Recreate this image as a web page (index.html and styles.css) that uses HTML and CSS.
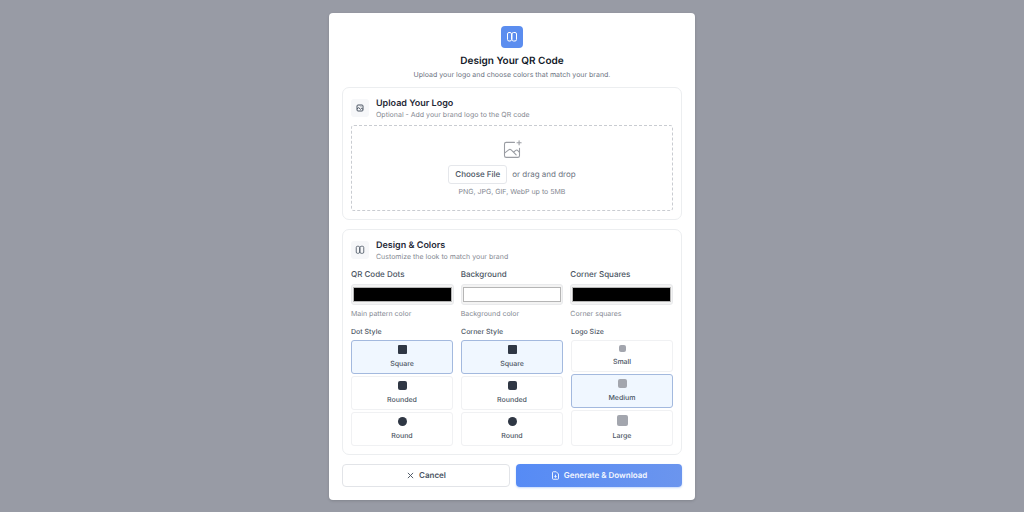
FILE: index.html
```html
<!DOCTYPE html>
<html lang="en">
<head>
  <meta charset="UTF-8">
  <meta name="viewport" content="width=device-width, initial-scale=1.0">
  <title>Design Your QR Code</title>
  <link rel="stylesheet" href="styles.css">
</head>
<body>
  <div class="overlay">
    <form class="modal" role="dialog" aria-labelledby="modalTitle">
      <header class="modal-header">
        <div class="brand-icon">
          <svg width="12" height="12" viewBox="0 0 24 24" fill="none" stroke="currentColor" stroke-width="2">
            <rect x="3" y="3" width="8" height="17" rx="3"/>
            <rect x="12" y="3" width="9" height="17" rx="3"/>
          </svg>
        </div>
        <h1 id="modalTitle">Design Your QR Code</h1>
        <p>Upload your logo and choose colors that match your brand.</p>
      </header>

      <section class="card">
        <div class="card-header">
          <div class="card-icon">
            <svg width="8" height="8" viewBox="0 0 24 24" fill="none" stroke="currentColor" stroke-width="3">
              <rect x="3" y="3" width="18" height="18" rx="3"/>
              <path d="M3 15l5-4 6 5 3-3 4 3M14 8h2"/>
            </svg>
          </div>
          <div>
            <h2>Upload Your Logo</h2>
            <p>Optional - Add your brand logo to the QR code</p>
          </div>
        </div>
        <div class="dropzone">
          <svg class="dropzone-icon" width="20" height="20" viewBox="0 0 24 24" fill="none" stroke="currentColor" stroke-width="1.3" stroke-linecap="round" stroke-linejoin="round">
            <path d="M15 4H5a2 2 0 0 0-2 2v14a2 2 0 0 0 2 2h14a2 2 0 0 0 2-2V11"/>
            <path d="M3 17l5-4q1.500-1 3 0l6 6M14 16l2-2q2-1.500 3 0l2 2"/>
            <path d="M20.500 2v5M18 4.500h5"/>
          </svg>
          <div class="dropzone-row">
            <button type="button" class="choose-file" id="chooseFile">Choose File</button>
            <input type="file" id="logoFile" accept=".png,.jpg,.jpeg,.gif,.webp" aria-label="Logo file" hidden>
            <span>or drag and drop</span>
          </div>
          <p>PNG, JPG, GIF, WebP up to 5MB</p>
        </div>
      </section>

      <section class="card card-design">
        <div class="card-header">
          <div class="card-icon">
            <svg width="10" height="10" viewBox="0 0 24 24" fill="none" stroke="currentColor" stroke-width="2">
              <rect x="3" y="3" width="8" height="17" rx="3"/>
              <rect x="12" y="3" width="9" height="17" rx="3"/>
            </svg>
          </div>
          <div>
            <h2>Design &amp; Colors</h2>
            <p>Customize the look to match your brand</p>
          </div>
        </div>

        <div class="colors">
          <div class="color-field">
            <label for="dotColor">QR Code Dots</label>
            <input type="color" id="dotColor" value="#000000">
            <p>Main pattern color</p>
          </div>
          <div class="color-field">
            <label for="bgColor">Background</label>
            <input type="color" id="bgColor" value="#ffffff">
            <p>Background color</p>
          </div>
          <div class="color-field">
            <label for="cornerColor">Corner Squares</label>
            <input type="color" id="cornerColor" value="#000000">
            <p>Corner squares</p>
          </div>
        </div>

        <div class="styles">
          <fieldset class="options">
            <legend>Dot Style</legend>
            <label class="option"><input type="radio" name="dotStyle" checked><span class="shape square"></span>Square</label>
            <label class="option"><input type="radio" name="dotStyle"><span class="shape rounded"></span>Rounded</label>
            <label class="option"><input type="radio" name="dotStyle"><span class="shape round"></span>Round</label>
          </fieldset>
          <fieldset class="options">
            <legend>Corner Style</legend>
            <label class="option"><input type="radio" name="cornerStyle" checked><span class="shape square"></span>Square</label>
            <label class="option"><input type="radio" name="cornerStyle"><span class="shape rounded"></span>Rounded</label>
            <label class="option"><input type="radio" name="cornerStyle"><span class="shape round"></span>Round</label>
          </fieldset>
          <fieldset class="options">
            <legend>Logo Size</legend>
            <label class="option"><input type="radio" name="logoSize"><span class="shape logo-small"></span>Small</label>
            <label class="option"><input type="radio" name="logoSize" checked><span class="shape logo-medium"></span>Medium</label>
            <label class="option"><input type="radio" name="logoSize"><span class="shape logo-large"></span>Large</label>
          </fieldset>
        </div>
      </section>

      <footer class="actions">
        <button type="button" class="btn btn-cancel">
          <svg width="9" height="9" viewBox="0 0 24 24" fill="none" stroke="currentColor" stroke-width="2.500">
            <path d="M5 5l14 14M19 5L5 19"/>
          </svg>
          Cancel
        </button>
        <button type="button" class="btn btn-primary">
          <svg width="9" height="9" viewBox="0 0 24 24" fill="none" stroke="currentColor" stroke-width="2.500" stroke-linejoin="round">
            <path d="M14 2H6a2 2 0 0 0-2 2v16a2 2 0 0 0 2 2h12a2 2 0 0 0 2-2V8zM12 10v7M9 14l3 3 3-3"/>
          </svg>
          Generate &amp; Download
        </button>
      </footer>
    </form>
  </div>

  <script>
    document.getElementById('chooseFile').addEventListener('click', function () {
      document.getElementById('logoFile').click();
    });
  </script>
</body>
</html>
```
FILE: styles.css
```css
* {
  box-sizing: border-box;
}
body {
  margin: 0;
  font-family: Inter, "Liberation Sans", sans-serif;
  font-size: 7px;
  text-rendering: geometricPrecision;
  color: #1f2937;
  background-color: #989ba5;
}
h1, h2, p {
  margin: 0;
}
button, input {
  font-family: inherit;
  text-rendering: inherit;
}
.overlay {
  min-height: 100vh;
  display: flex;
  align-items: center;
  justify-content: center;
}
.modal {
  width: 100%;
  max-width: 366px;
  padding: 13px;
  background: #fff;
  border-radius: 4px;
  box-shadow: 0 1px 3px rgba(0,0,0,0.15);
}
.modal-header {
  display: flex;
  flex-direction: column;
  align-items: center;
  margin-bottom: 7px;
}
.brand-icon {
  width: 22px;
  height: 22px;
  display: flex;
  align-items: center;
  justify-content: center;
  margin-bottom: 6px;
  color: #fff;
  background: #5b8def;
  border-radius: 4px;
}
h1 {
  font-size: 10px;
  line-height: 14px;
  font-weight: 600;
  color: #111827;
}
p {
  line-height: 10px;
  color: #858992;
}
.modal-header p {
  margin-top: 2px;
  color: #6b7280;
}
.card {
  padding: 9px 8px 8px;
  margin-bottom: 9px;
  border: 1px solid #eceef0;
  border-radius: 7px;
}
.card-header {
  display: flex;
  align-items: center;
  gap: 7px;
  margin-bottom: 5px;
}
.card-design .card-header {
  margin-bottom: 7px;
}
.card-icon {
  width: 18px;
  height: 18px;
  display: flex;
  align-items: center;
  justify-content: center;
  color: #4b5563;
  background: #f6f7f9;
  border-radius: 3px;
}
h2 {
  font-size: 9px;
  line-height: 13px;
  font-weight: 600;
}
.dropzone {
  display: flex;
  flex-direction: column;
  align-items: center;
  padding: 13px;
  border: 1px dashed #c9ccd1;
  border-radius: 3px;
}
.dropzone-icon {
  color: #9a9da3;
  margin-bottom: 6px;
}
.dropzone-row {
  display: flex;
  align-items: center;
  gap: 5px;
  margin-bottom: 3px;
  font-size: 8px;
  color: #6b7280;
}
.choose-file {
  height: 19px;
  padding: 0 6px;
  font-size: 8px;
  font-weight: 500;
  color: #4b5563;
  background: #fff;
  border: 1px solid #e5e7eb;
  border-radius: 3px;
}
.colors {
  display: grid;
  grid-template-columns: repeat(3, 1fr);
  gap: 7px;
  margin-bottom: 8px;
}
.color-field label {
  display: block;
  font-size: 8px;
  line-height: 10px;
  font-weight: 500;
  color: #4b5563;
}
.color-field input {
  display: block;
  width: 100%;
  height: 21px;
  margin: 5px 0 4px;
  padding: 2px 1px;
  background: #f3f3f3;
  border: 1px solid #e9eaec;
  border-radius: 3px;
}
.color-field input::-webkit-color-swatch-wrapper {
  padding: 0;
}
.color-field input::-webkit-color-swatch {
  border: 1px solid #b5b5b5;
}
.styles {
  display: grid;
  grid-template-columns: repeat(3, 1fr);
  gap: 8px;
}
.options {
  display: flex;
  flex-direction: column;
  gap: 2px;
  min-width: 0;
  margin: 0;
  padding: 0;
  border: none;
}
.options legend {
  padding: 0;
  margin-bottom: 3px;
  line-height: 10px;
  font-weight: 500;
  color: #4b5563;
}
.option {
  position: relative;
  display: flex;
  flex-direction: column;
  align-items: center;
  gap: 5px;
  padding: 4px;
  line-height: 10px;
  font-weight: 500;
  color: #4b5563;
  border: 1px solid #f0f1f3;
  border-radius: 3px;
  cursor: pointer;
}
.option input {
  position: absolute;
  inset: 0;
  margin: 0;
  opacity: 0;
  cursor: pointer;
}
.option:has(input:checked) {
  background: #f0f7ff;
  border-color: #a3b9de;
}
.shape {
  width: 9px;
  height: 9px;
  background: #2f3744;
}
.square {
  border-radius: 1px;
}
.rounded {
  border-radius: 2px;
}
.round {
  border-radius: 50%;
}
.logo-small, .logo-medium, .logo-large {
  background: #a3a6ae;
  border-radius: 2px;
}
.logo-small {
  width: 7px;
  height: 7px;
}
.logo-large {
  width: 11px;
  height: 11px;
}
.actions {
  display: flex;
  gap: 6px;
}
.btn {
  flex: 1;
  height: 23px;
  display: flex;
  align-items: center;
  justify-content: center;
  gap: 4px;
  font-size: 8px;
  border-radius: 4px;
  cursor: pointer;
}
.btn-cancel {
  font-weight: 600;
  color: #4b5563;
  background: #fff;
  border: 1px solid #e2e4e8;
}
.btn-primary {
  font-weight: 600;
  color: #f3f7ff;
  background: linear-gradient(90deg, #568bf5, #6b95ee);
  border: none;
  box-shadow: 0 1px 2px rgba(59,130,246,0.3);
}
```
